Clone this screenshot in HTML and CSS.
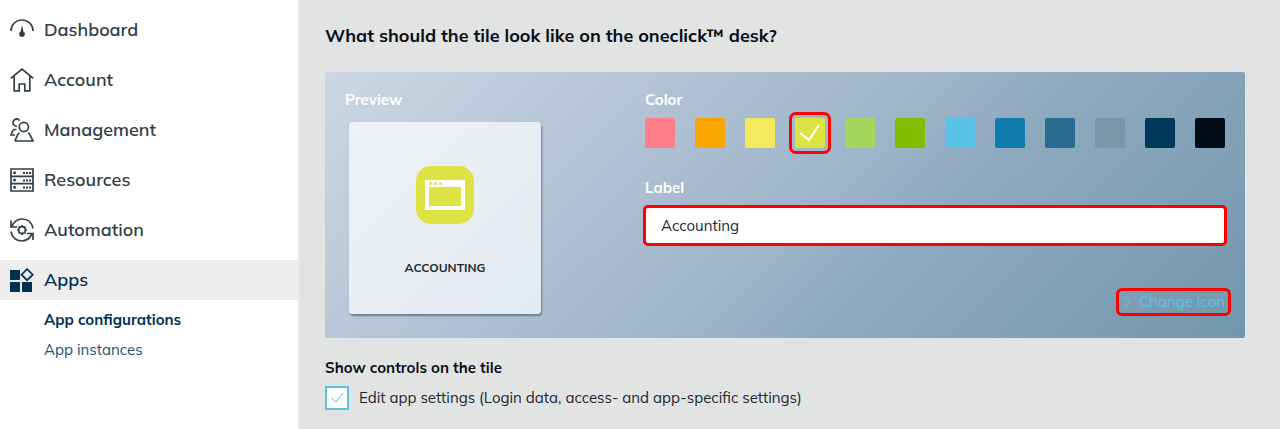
FILE: index.html
```html
<!DOCTYPE html>
<html lang="en">
<head>
<meta charset="utf-8">
<title>App configurations</title>
<link rel="stylesheet" href="styles.css">
</head>
<body>

<nav class="sidebar">
    <ul class="menu">
        <li><a class="menu-item" href="#">
            <svg class="icon" viewBox="0 0 24 24"><path d="M1 13C1 7 5.500 2 12 2s11 5 11 11"/><path class="solid" d="M12 7l1.400 6.600a2.900 2.900 0 1 1-2.800 0z"/></svg>
            Dashboard</a></li>
        <li><a class="menu-item" href="#">
            <svg class="icon" viewBox="0 0 24 24"><path d="M.8 10.300L12 1.200l11.200 9.100M4.200 8.500V22.800h5V16h5.600v6.800h5V8.500"/></svg>
            Account</a></li>
        <li><a class="menu-item" href="#">
            <svg class="icon" viewBox="0 0 24 24"><circle cx="13.800" cy="9" r="4.600"/><path d="M4.800 23L8 16.200c.4-.9 1-1.200 1.800-1.200M17.800 15c.8 0 1.400.3 1.800 1.200L23 23H4.800"/><path d="M9.500 2.600C8.500.9 6.500.6 5 1.400 2.800 2.600 2.500 5.400 3.900 7c.8.900 1.800 1.200 3 1.300M6.500 11.500H5c-1.200 0-1.800.4-2.300 1.400L1 17h4"/></svg>
            Management</a></li>
        <li><a class="menu-item" href="#">
            <svg class="icon" viewBox="0 0 24 24"><path d="M1 1h22v22H1zM1 8.300h22M1 15.700h22"/><path class="dot" d="M4.500 4.700h.01M4.500 12h.01M4.500 19.300h.01"/><path class="dots" d="M13 5h8M13 12.500h8M13 19.500h8"/></svg>
            Resources</a></li>
        <li><a class="menu-item" href="#">
            <svg class="icon" viewBox="0 0 24 24"><path d="M2 8.300C4 3.500 8 1 12 1c5.500 0 10 3.500 11 9.500M22 15.700C20 20.500 16 23 12 23 6.500 23 2 19.500 1 13.500"/><path d="M1 2.500V9h6M23 22v-6.500h-6"/><circle cx="12" cy="12" r="3.400"/><path class="cog" d="M12 7v1.800M12 15.200V17M7 12h1.800M15.200 12H17M8.500 8.500l1.200 1.200M14.300 14.300l1.200 1.200M15.500 8.500l-1.200 1.200M9.700 14.300l-1.200 1.200"/></svg>
            Automation</a></li>
        <li><a class="menu-item active" href="#">
            <svg class="icon" viewBox="0 0 24 24"><path class="solid" d="M0 2h10v10H0zM0 14h10v10H0zM12 14h10v10H12z"/><path d="M17 1.200l5.800 5.500L17 12.200l-5.500-5.500z"/></svg>
            Apps</a>
            <ul class="submenu">
                <li><a class="current" href="#">App configurations</a></li>
                <li><a href="#">App instances</a></li>
            </ul>
        </li>
    </ul>
</nav>

<main class="content">
    <h1>What should the tile look like on the oneclick™ desk?</h1>

    <div class="panel">
        <section class="preview">
            <h2 class="caption">Preview</h2>
            <div class="tile">
                <svg class="tile-icon" viewBox="0 0 58 58">
                    <rect class="tile-back" width="58" height="58" rx="15"/>
                    <path class="tile-window" fill-rule="evenodd" d="M9 14h40v30H9zM13 21v19h32V21z"/>
                    <circle class="tile-back" cx="14.500" cy="17.500" r="1.500"/>
                    <circle class="tile-back" cx="19.500" cy="17.500" r="1.500"/>
                    <circle class="tile-back" cx="24.500" cy="17.500" r="1.500"/>
                </svg>
                <span class="tile-name">ACCOUNTING</span>
            </div>
        </section>

        <form class="settings">
            <fieldset class="colors">
                <legend class="caption">Color</legend>
                <div class="swatches">
                    <input class="swatch pink" type="radio" name="color" aria-label="Pink">
                    <input class="swatch orange" type="radio" name="color" aria-label="Orange">
                    <input class="swatch yellow" type="radio" name="color" aria-label="Yellow">
                    <label class="picked marked">
                        <input class="swatch lime" type="radio" name="color" aria-label="Lime" checked>
                        <svg class="tick" viewBox="0 0 30 30"><path d="M5 15l9 7L24 7"/></svg>
                    </label>
                    <input class="swatch light-green" type="radio" name="color" aria-label="Light green">
                    <input class="swatch green" type="radio" name="color" aria-label="Green">
                    <input class="swatch sky" type="radio" name="color" aria-label="Sky">
                    <input class="swatch blue" type="radio" name="color" aria-label="Blue">
                    <input class="swatch steel" type="radio" name="color" aria-label="Steel">
                    <input class="swatch gray" type="radio" name="color" aria-label="Gray">
                    <input class="swatch navy" type="radio" name="color" aria-label="Navy">
                    <input class="swatch black" type="radio" name="color" aria-label="Black">
                </div>
            </fieldset>
            <label class="caption" for="label">Label</label>
            <input class="text marked" id="label" type="text" value="Accounting">
            <a class="change marked" href="#">
                <svg class="chevron" viewBox="0 0 8 14"><path d="M1 1l6 6-6 6"/></svg>
                Change icon</a>
        </form>
    </div>

    <h2 class="controls-title">Show controls on the tile</h2>
    <label class="control">
        <span class="check">
            <input type="checkbox" checked>
            <svg class="tick" viewBox="0 0 24 24"><path d="M6 12l5 4 7-9"/></svg>
        </span>
        Edit app settings (Login data, access- and app-specific settings)
    </label>
</main>

</body>
</html>
```
FILE: styles.css
```css
* {
    box-sizing: border-box;
}

body {
    display: flex;
    min-height: 100vh;
    margin: 0;
    background: #e2e4e3;
    color: #1c2733;
    font: 15px/20px Mulish, Muli, Lato, sans-serif;
}

h1, h2, ul, fieldset {
    margin: 0;
    padding: 0;
}

a {
    text-decoration: none;
}

svg {
    fill: none;
    stroke: currentColor;
}

/* sidebar */
.sidebar {
    flex: 0 0 299px;
    padding-top: 10px;
    background: #fff;
    border-right: 1px solid #eceded;
}

.menu, .submenu {
    list-style: none;
}

.menu {
    display: flex;
    flex-direction: column;
    gap: 10px;
}

.menu-item {
    display: flex;
    align-items: center;
    gap: 10px;
    height: 40px;
    padding-left: 10px;
    color: #303e49;
    font-size: 18px;
    font-weight: 600;
}

.menu-item.active {
    background: #ededed;
    color: #003054;
}

.icon {
    width: 24px;
    height: 24px;
    stroke-width: 1.7;
}

.icon .solid {
    fill: currentColor;
    stroke: none;
}

.icon .dot {
    stroke-width: 3;
    stroke-linecap: round;
}

.icon .dots {
    stroke-width: 2;
    stroke-dasharray: 2 1;
}

.submenu {
    padding: 5px 0 0 44px;
}

.submenu a {
    display: block;
    color: #24506f;
    line-height: 30px;
}

.submenu .current {
    color: #003054;
    font-weight: 700;
}

/* content */
.content {
    flex: 1;
    padding: 24px 35px 16px 26px;
}

h1 {
    color: #080f1a;
    font-size: 18px;
    line-height: 24px;
}

.panel {
    display: flex;
    margin-top: 24px;
    padding: 18px 20px 24px;
    border-radius: 2px;
    background: linear-gradient(135deg, #ccd7e3, #9fb4c9 52%, #8faabf 64%, #7297ad);
}

.caption {
    display: block;
    padding: 0;
    color: #fff;
    font-size: 15px;
    font-weight: 700;
    line-height: 20px;
}

.preview {
    flex: 0 0 300px;
}

.tile {
    display: flex;
    flex-direction: column;
    align-items: center;
    width: 192px;
    height: 192px;
    margin: 12px 4px 0;
    padding-top: 44px;
    border-radius: 4px;
    background: linear-gradient(135deg, #eef2f7, #e7edf1 60%, #e4eaf3);
    box-shadow: 1px 2px 2px #6b7f92;
}

.tile-icon {
    width: 58px;
    height: 58px;
    stroke: none;
}

.tile-back {
    fill: #dce342;
}

.tile-window {
    fill: #fff;
}

.tile-name {
    margin-top: 34px;
    font-size: 12px;
    font-weight: 700;
}

.settings {
    display: flex;
    flex: 1;
    flex-direction: column;
}

.colors {
    margin-bottom: 30px;
    border: 0;
}

.swatches {
    display: flex;
    justify-content: space-between;
    padding-top: 8px;
}

.swatch {
    appearance: none;
    width: 30px;
    height: 30px;
    margin: 0;
    border-radius: 2px;
}

.pink { background: #ff7f8b; }
.orange { background: #fba600; }
.yellow { background: #f4e95c; }
.lime { background: #dce342; }
.light-green { background: #a5d75e; }
.green { background: #84bd00; }
.sky { background: #5bc2e7; }
.blue { background: #107dae; }
.steel { background: #2a6c8f; }
.gray { background: #7b98ab; }
.navy { background: #003859; }
.black { background: #000d17; }

/* box and its tick share one cell */
.picked, .check {
    display: grid;
}

.picked > *, .check > * {
    grid-area: 1 / 1;
}

.tick {
    width: 24px;
    height: 24px;
    pointer-events: none;
}

.picked .tick {
    width: 30px;
    height: 30px;
    stroke-width: 2;
}

.marked {
    outline: 3px solid #fe0000;
    border-radius: 3px;
}

.picked {
    border-radius: 1px;
    color: #fff;
    outline-offset: 3px;
}

.text {
    width: 100%;
    height: 37px;
    margin-top: 9px;
    padding: 0 16px;
    border: 0;
    background: #fff;
    color: inherit;
    font: inherit;
    outline-offset: -1px;
}

.change {
    display: flex;
    align-items: center;
    align-self: flex-end;
    gap: 8px;
    margin: 47px -3px 0 0;
    padding: 0 3px 0 4px;
    color: #5bc2e7;
    line-height: 22px;
}

.chevron {
    width: 8px;
    height: 14px;
}

.controls-title {
    margin-top: 20px;
    color: #080f1a;
    font-size: 15px;
    line-height: 20px;
}

.control {
    display: flex;
    align-items: center;
    gap: 10px;
    margin-top: 8px;
}

.check {
    width: 24px;
    height: 24px;
    color: #5bc2e7;
}

.check input {
    appearance: none;
    width: 24px;
    height: 24px;
    margin: 0;
    border: 2px solid #5bc2e7;
    background: #fff;
}
```
